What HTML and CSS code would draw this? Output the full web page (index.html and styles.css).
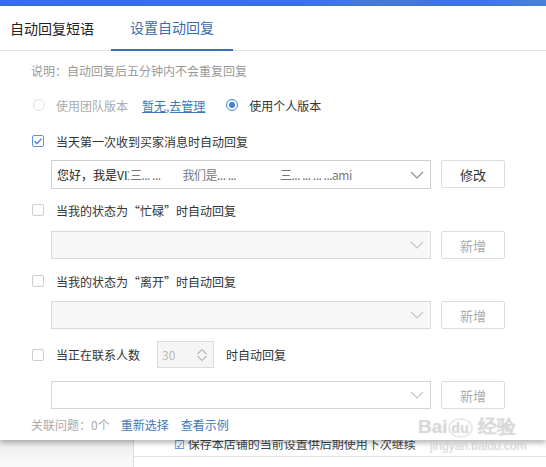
FILE: index.html
```html
<!DOCTYPE html>
<html lang="zh">
<head>
<meta charset="utf-8">
<link rel="stylesheet" href="styles.css">
</head>
<body>
<div class="topbar"></div>
<div class="panel">
  <div class="tabs">
    <div class="tab">自动回复短语</div>
    <div class="tab active">设置自动回复</div>
  </div>
  <div class="content">
    <div class="row note">说明：自动回复后五分钟内不会重复回复</div>

    <div class="row radios">
      <span class="radio disabled"></span><span class="muted lbl">使用团队版本</span>
      <a class="link manage">暂无,去管理</a>
      <span class="radio checked"></span><span class="lbl">使用个人版本</span>
    </div>

    <div class="row check r-cb1"><span class="cb checked"><svg viewBox="0 0 12 12" width="12" height="12"><path d="M2.6 6.2 L5 8.6 L9.6 3.6" fill="none" stroke="#3f7fcf" stroke-width="1.4"/></svg></span><span class="lbl">当天第一次收到买家消息时自动回复</span></div>
    <div class="selrow r-sel1">
      <div class="select"><span class="val">您好，我是VI<span class="blur">⁚三... ...&nbsp;&nbsp;&nbsp;&nbsp;&nbsp;&nbsp;&nbsp;&nbsp;&nbsp;&nbsp;我们是... ...&nbsp;&nbsp;&nbsp;&nbsp;&nbsp;&nbsp;&nbsp;&nbsp;&nbsp;&nbsp;&nbsp;&nbsp;&nbsp;&nbsp;&nbsp;&nbsp;&nbsp;&nbsp;&nbsp;&nbsp;三... ... ... ...ami</span></span><svg class="chev" viewBox="0 0 14 8" width="14" height="8"><path d="M1 1 L7 7 L13 1" fill="none" stroke="#8c8c8c" stroke-width="1.1"/></svg></div>
      <div class="btn">修改</div>
    </div>

    <div class="row check r-cb2"><span class="cb"></span><span class="lbl">当我的状态为“忙碌”时自动回复</span></div>
    <div class="selrow r-sel2">
      <div class="select dis"><span class="val"></span><svg class="chev" viewBox="0 0 14 8" width="14" height="8"><path d="M1 1 L7 7 L13 1" fill="none" stroke="#c4c4c4" stroke-width="1.1"/></svg></div>
      <div class="btn dis">新增</div>
    </div>

    <div class="row check r-cb3"><span class="cb"></span><span class="lbl">当我的状态为“离开”时自动回复</span></div>
    <div class="selrow r-sel3">
      <div class="select dis"><span class="val"></span><svg class="chev" viewBox="0 0 14 8" width="14" height="8"><path d="M1 1 L7 7 L13 1" fill="none" stroke="#c4c4c4" stroke-width="1.1"/></svg></div>
      <div class="btn dis">新增</div>
    </div>

    <div class="row check r-cb4"><span class="cb"></span><span class="lbl">当正在联系人数</span>
      <div class="num"><span>30</span><svg viewBox="0 0 12 14" width="12" height="14"><path d="M1.5 6 L6 1.5 L10.5 6 M1.5 8 L6 12.5 L10.5 8" fill="none" stroke="#b8b8b8" stroke-width="1.1"/></svg></div>
      <span class="lbl">时自动回复</span>
    </div>
    <div class="selrow r-sel4">
      <div class="select"><span class="val"></span><svg class="chev" viewBox="0 0 14 8" width="14" height="8"><path d="M1 1 L7 7 L13 1" fill="none" stroke="#c4c4c4" stroke-width="1.1"/></svg></div>
      <div class="btn dis">新增</div>
    </div>

    <div class="row foot"><span class="muted">关联问题：0个</span><a class="link">重新选择</a><a class="link">查看示例</a></div>
  </div>
</div>
<div class="under">
  <div class="under-left"></div>
  <div class="under-right">
    <div class="under-text"><span class="ucheck">☑</span> 保存本店铺的当前设置供后期使用下次继续</div>
  </div>
</div>
<div class="watermark"><div class="wm1">Bai<span class="paw">du</span> 经验</div><div class="wm2">jingyan.baidu.com</div></div>
</body>
</html>
```

FILE: styles.css
```css
* { box-sizing: border-box; }
html, body { margin: 0; padding: 0; }
body {
  width: 546px;
  height: 467px;
  overflow: hidden;
  background: #fff;
  font-family: "Noto Sans CJK SC", "Microsoft YaHei", sans-serif;
  font-size: 12px;
  color: #333;
  position: relative;
}
.topbar {
  height: 6px;
  background: linear-gradient(90deg, #356ee6 0%, #3b73e4 55%, #4a7ad8 70%, #3d73e2 85%, #4b80dc 100%);
}
.panel {
  position: relative;
  z-index: 2;
  background: #fff;
  padding-bottom: 6px;
  box-shadow: 0 3px 5px rgba(0,0,0,0.28);
}
.tabs {
  display: flex;
  height: 45px;
  border-bottom: 1px solid #e4e4e4;
}
.tab {
  font-size: 14px;
  line-height: 44px;
  color: #222;
  margin-left: 10px;
}
.tab.active {
  margin-left: 17px;
  padding: 0 19px;
  color: #3a6cb2;
  border-bottom: 2px solid #3a6cb2;
  line-height: 42px;
  height: 45px;
  margin-bottom: -1px;
}
.content { padding-left: 31px; }
.row { display: flex; align-items: center; height: 20px; }
.note { margin-top: 9px; color: #999; }
.radios { margin-top: 15px; }
.radio {
  width: 12px; height: 12px; border-radius: 50%;
  border: 1px solid #e0e0e0; margin-left: 2px; margin-right: 11px;
  position: relative; flex: none;
}
.radio.checked { border-color: #3d82d3; margin-left: 21px; }
.radio.checked::after {
  content: ""; position: absolute; left: 2px; top: 2px;
  width: 6px; height: 6px; border-radius: 50%; background: #3d82d3;
}
.muted { color: #aaa; }
.lbl { white-space: nowrap; }
.link { color: #3b79bf; margin-left: 12px; white-space: nowrap; }
.manage { text-decoration: underline; margin-left: 14px; }
.check .cb {
  width: 12px; height: 12px; border: 1px solid #cdcdcd; border-radius: 2px;
  margin-left: 1px; margin-right: 12px; flex: none; display: flex;
  align-items: center; justify-content: center; overflow: hidden;
}
.cb.checked { border-color: #5c96d8; }
.cb svg { flex: none; }
.r-cb1 { margin-top: 16px; }
.r-cb2 { margin-top: 11px; }
.r-cb3 { margin-top: 12px; }
.r-cb4 { margin-top: 12px; height: 27px; }
.selrow { display: flex; padding-left: 20px; gap: 10px; }
.r-sel1 { margin-top: 9px; }
.r-sel2 { margin-top: 11px; }
.r-sel3 { margin-top: 10px; }
.r-sel4 { margin-top: 13px; }
.select {
  width: 380px; height: 28px; border: 1px solid #cfcfcf;
  display: flex; align-items: center; justify-content: space-between;
  padding: 0 6px 0 5px; background: #fff;
}
.r-sel1 .select { height: 29px; }
.select.dis { background: #f7f7f7; border-color: #d9d9d9; }
.r-sel4 .select { border-color: #d6d6d6; }
.val { white-space: nowrap; overflow: hidden; color: #222; }
.blur { color: #777; letter-spacing: -0.5px; }
.chev { flex: none; }
.btn {
  width: 64px; height: 28px; border: 1px solid #dcdcdc; border-radius: 2px;
  display: flex; align-items: center; justify-content: center;
  font-size: 13px; color: #333; background: #fff;
}
.btn.dis { color: #aaa; }
.num {
  width: 57px; height: 27px; margin-left: 17px; margin-right: 12px;
  background: #f5f5f5; border: 1px solid #dcdcdc;
  display: flex; align-items: center; justify-content: space-between;
  padding: 0 5px 0 4px; color: #bbb;
}
.foot { margin-top: 5px; }
.foot .link:first-of-type { margin-left: 11px; }
.under {
  display: flex; height: 27px; background: #fff; position: relative; z-index: 1;
}
.under-left { width: 134px; border-right: 1px solid #ddd; background: linear-gradient(#ececec, #fafafa); }
.under-right { flex: 1; border-bottom: 1px solid #e2e2e2; height: 17px; overflow: hidden; }
.under-text {
  margin-top: -5px; margin-left: 40px; font-size: 12px; color: #444; white-space: nowrap;
}
.ucheck { color: #3d7fd0; }
.watermark {
  position: absolute; left: 418px; top: 416px; z-index: 3;
  color: rgba(215,215,215,0.55); font-family: "Liberation Sans", sans-serif;
  text-shadow: 0 0 1px rgba(170,170,170,0.45);
}
.wm1 { font-size: 19px; font-weight: bold; line-height: 22px; }
.paw { font-size: 14px; border: 2px solid rgba(215,215,215,0.55); border-radius: 50%; padding: 0 2px; }
.wm2 { font-size: 12px; line-height: 14px; margin-left: 12px; }
```
